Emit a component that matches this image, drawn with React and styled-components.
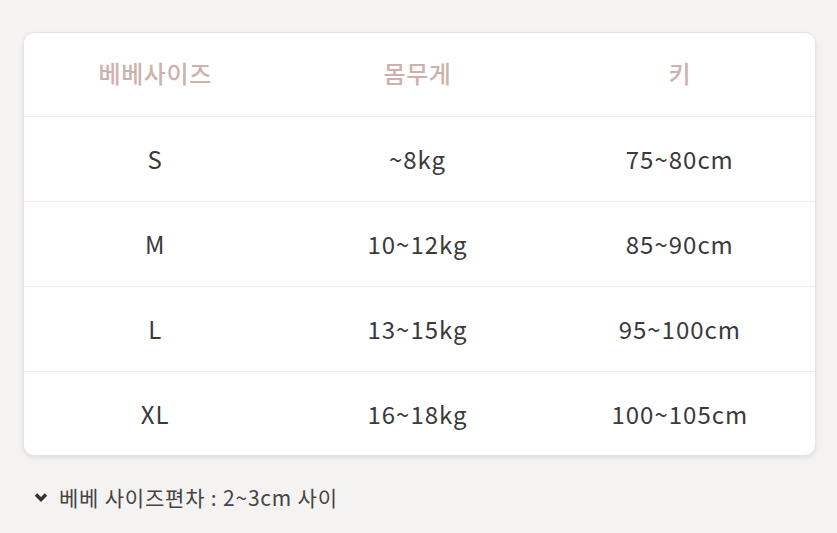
import React from "react"
import styled, { createGlobalStyle } from "styled-components"

const GlobalStyle = createGlobalStyle`
    html, body {
        margin: 0;
        padding: 0;
        background: #f5f3f1;
        font-family: "Noto Sans CJK KR", "Noto Sans", sans-serif;
    }
`

const Page = styled.div`
    width: 837px;
    height: 533px;
    padding: 32px 21px 0 23px;
    box-sizing: border-box;
`

const Card = styled.div`
    background: #fff;
    border: 1px solid #e6e3e0;
    border-radius: 11px;
    box-shadow: 0 2px 4px rgba(0, 0, 0, 0.08);
    height: 424px;
    box-sizing: border-box;
    overflow: hidden;
`

const Row = styled.div`
    display: grid;
    grid-template-columns: 1fr 1fr 1fr;
    padding-right: 4px;
    height: ${p => (p.header ? 84 : 85)}px;
    align-items: center;
    border-bottom: ${p => (p.last ? "none" : "1px solid #ece9e6")};
    box-sizing: border-box;
`

const Cell = styled.div`
    text-align: center;
    font-size: 24px;
    color: ${p => (p.header ? "#cdb1ac" : "#3a3a3a")};
    font-weight: ${p => (p.header ? 500 : 400)};
    margin-top: ${p => (p.header ? -4 : -2)}px;
    letter-spacing: ${p => (p.header ? 0.6 : 1)}px;
`

const Note = styled.div`
    display: flex;
    align-items: center;
    gap: 11px;
    margin: 26px 0 0 11px;
    font-size: 21px;
    color: #444;
    letter-spacing: 0.8px;
`

const rows = [
    ["S", "~8kg", "75~80cm"],
    ["M", "10~12kg", "85~90cm"],
    ["L", "13~15kg", "95~100cm"],
    ["XL", "16~18kg", "100~105cm"],
]

const App = () => {
    return (
        <Page>
            <GlobalStyle />
            <Card>
                <Row header>
                    <Cell header>베베사이즈</Cell>
                    <Cell header>몸무게</Cell>
                    <Cell header>키</Cell>
                </Row>
                {rows.map((r, i) => (
                    <Row key={r[0]} last={i === rows.length - 1}>
                        {r.map(v => <Cell key={v}>{v}</Cell>)}
                    </Row>
                ))}
            </Card>
            <Note>
                <svg width="14" height="11" viewBox="0 0 14 11">
                    <path d="M2 2.5 L7 7.5 L12 2.5" stroke="#333" strokeWidth="3.5" fill="none" />
                </svg>
                베베 사이즈편차 : 2~3cm 사이
            </Note>
        </Page>
    )
}

export default App
